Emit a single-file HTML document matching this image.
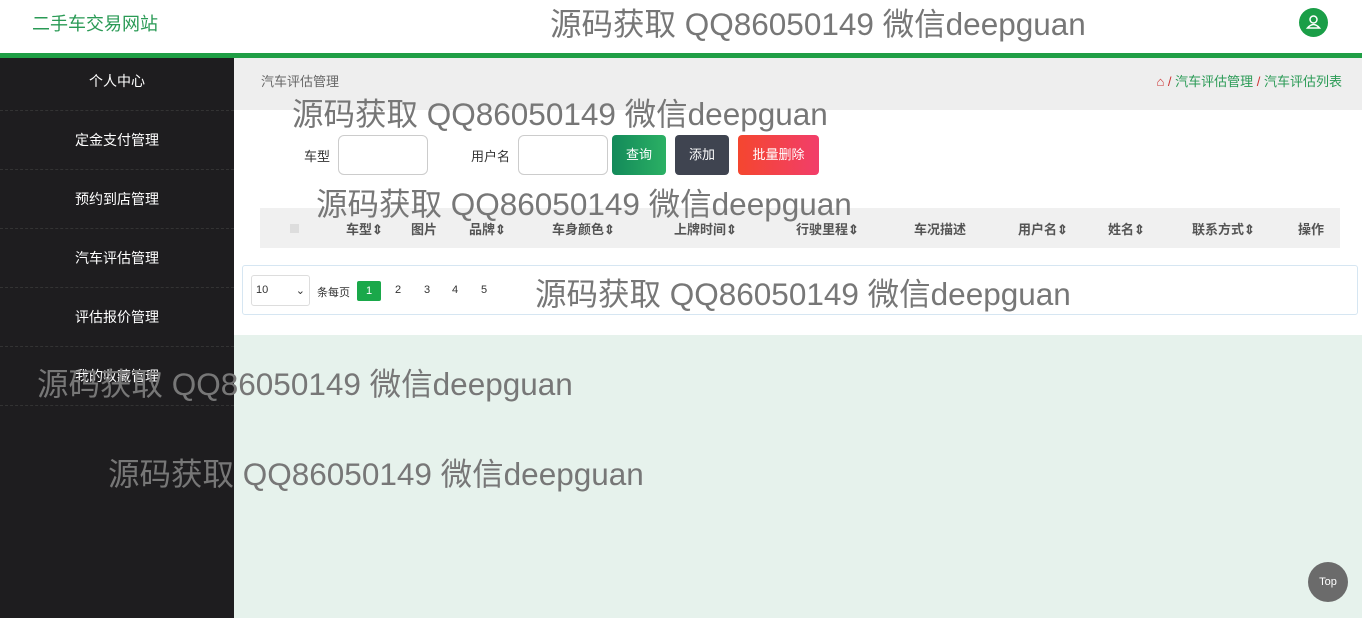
<!DOCTYPE html>
<html><head><meta charset="utf-8"><style>
*{margin:0;padding:0;box-sizing:border-box}
body{width:1362px;height:618px;overflow:hidden;position:relative;font-family:"Liberation Sans","Noto Sans CJK SC",sans-serif;background:#e6f2ec}
.hdr{position:absolute;left:0;top:0;width:1362px;height:58px;background:#fff;border-bottom:5px solid #1f9e45}
.logo{position:absolute;left:32px;top:10px;font-size:18px;color:#2a9a55}
.av{position:absolute;left:1299px;top:8px;width:29px;height:29px;border-radius:50%;background:#1a9e47}
.side{position:absolute;left:0;top:58px;width:234px;height:560px;background:#1e1d1f}
.side div{height:59px;line-height:59px;text-align:center;color:#fff;font-size:14px;border-bottom:1px dashed #333}
.side div:first-child{height:53px;line-height:46px}
.main{position:absolute;left:234px;top:58px;width:1128px;height:277px;background:#fff}
.bc{height:52px;background:#eee;position:relative;font-size:13px;color:#666}
.bc .l{position:absolute;left:27px;top:13px}
.bc .r{position:absolute;right:20px;top:13px;color:#2a9a55}
.bc .r b{color:#c33;font-weight:normal}
.lab{position:absolute;font-size:13px;color:#333}
.inp{position:absolute;width:90px;height:40px;border:1px solid #ccc;border-radius:6px;background:#fff}
.btn{position:absolute;height:40px;border-radius:4px;color:#fff;font-size:13px;line-height:40px;text-align:center}
.th{position:absolute;left:26px;top:150px;width:1080px;height:40px;background:#f0f0f0;font-size:13px;color:#555;font-weight:bold}
.th span{position:absolute;top:11px}
.pg{position:absolute;left:8px;top:207px;width:1116px;height:50px;border:1px solid #d6e6f2;border-radius:3px;background:#fff;font-size:11px;color:#333}
.wm{position:absolute;font-size:31.5px;color:#777;white-space:nowrap;font-family:"Liberation Sans","Noto Sans CJK SC",sans-serif}
.top{position:absolute;left:1308px;top:562px;width:40px;height:40px;border-radius:50%;background:#6b6b6b;color:#fff;font-size:11px;text-align:center;line-height:40px}
</style></head><body>
<div class="hdr"><div class="logo">二手车交易网站</div>
<div class="av"><svg width="29" height="29" viewBox="0 0 29 29"><circle cx="14.5" cy="11.5" r="3.5" fill="none" stroke="#fff" stroke-width="1.5"/><path d="M8.5 20 Q14.5 13 20.5 20 Z" fill="none" stroke="#fff" stroke-width="1.5"/></svg></div></div>
<div class="side"><div>个人中心</div><div>定金支付管理</div><div>预约到店管理</div><div>汽车评估管理</div><div>评估报价管理</div><div>我的收藏管理</div></div>
<div class="main">
<div class="bc"><span class="l">汽车评估管理</span><span class="r"><b>⌂ /</b> 汽车评估管理 <b>/</b> 汽车评估列表</span></div>
<span class="lab" style="left:70px;top:88px">车型</span><div class="inp" style="left:104px;top:77px"></div>
<span class="lab" style="left:237px;top:88px">用户名</span><div class="inp" style="left:284px;top:77px"></div>
<div class="btn" style="left:378px;top:77px;width:54px;background:linear-gradient(90deg,#138a5a,#2bb064)">查询</div>
<div class="btn" style="left:441px;top:77px;width:54px;background:#3f4450">添加</div>
<div class="btn" style="left:504px;top:77px;width:81px;background:linear-gradient(90deg,#f4462f,#f23e6a)">批量删除</div>
<div class="th"><span style="left:30px;width:9px;height:9px;background:#ddd;top:16px"></span><span style="left:86px">车型⇕</span><span style="left:151px">图片</span><span style="left:209px">品牌⇕</span><span style="left:292px">车身颜色⇕</span><span style="left:414px">上牌时间⇕</span><span style="left:536px">行驶里程⇕</span><span style="left:654px">车况描述</span><span style="left:758px">用户名⇕</span><span style="left:848px">姓名⇕</span><span style="left:932px">联系方式⇕</span><span style="left:1038px">操作</span></div>
<div class="pg"><div style="position:absolute;left:8px;top:9px;width:59px;height:31px;border:1px solid #ddd;border-radius:3px;padding:8px 4px">10<span style="float:right">⌄</span></div>
<span style="position:absolute;left:74px;top:18px">条每页</span>
<span style="position:absolute;left:114px;top:15px;width:24px;height:20px;background:#1aa84a;color:#fff;text-align:center;line-height:20px;border-radius:2px">1</span>
<span style="position:absolute;left:152px;top:18px">2</span><span style="position:absolute;left:181px;top:18px">3</span><span style="position:absolute;left:209px;top:18px">4</span><span style="position:absolute;left:238px;top:18px">5</span></div>
</div>
<div class="wm" style="left:550px;top:-1px">源码获取 QQ86050149 微信deepguan</div>
<div class="wm" style="left:292px;top:89px">源码获取 QQ86050149 微信deepguan</div>
<div class="wm" style="left:316px;top:179px">源码获取 QQ86050149 微信deepguan</div>
<div class="wm" style="left:535px;top:269px">源码获取 QQ86050149 微信deepguan</div>
<div class="wm" style="left:37px;top:359px">源码获取 QQ86050149 微信deepguan</div>
<div class="wm" style="left:108px;top:449px">源码获取 QQ86050149 微信deepguan</div>
<div class="top">Top</div>
</body></html>
